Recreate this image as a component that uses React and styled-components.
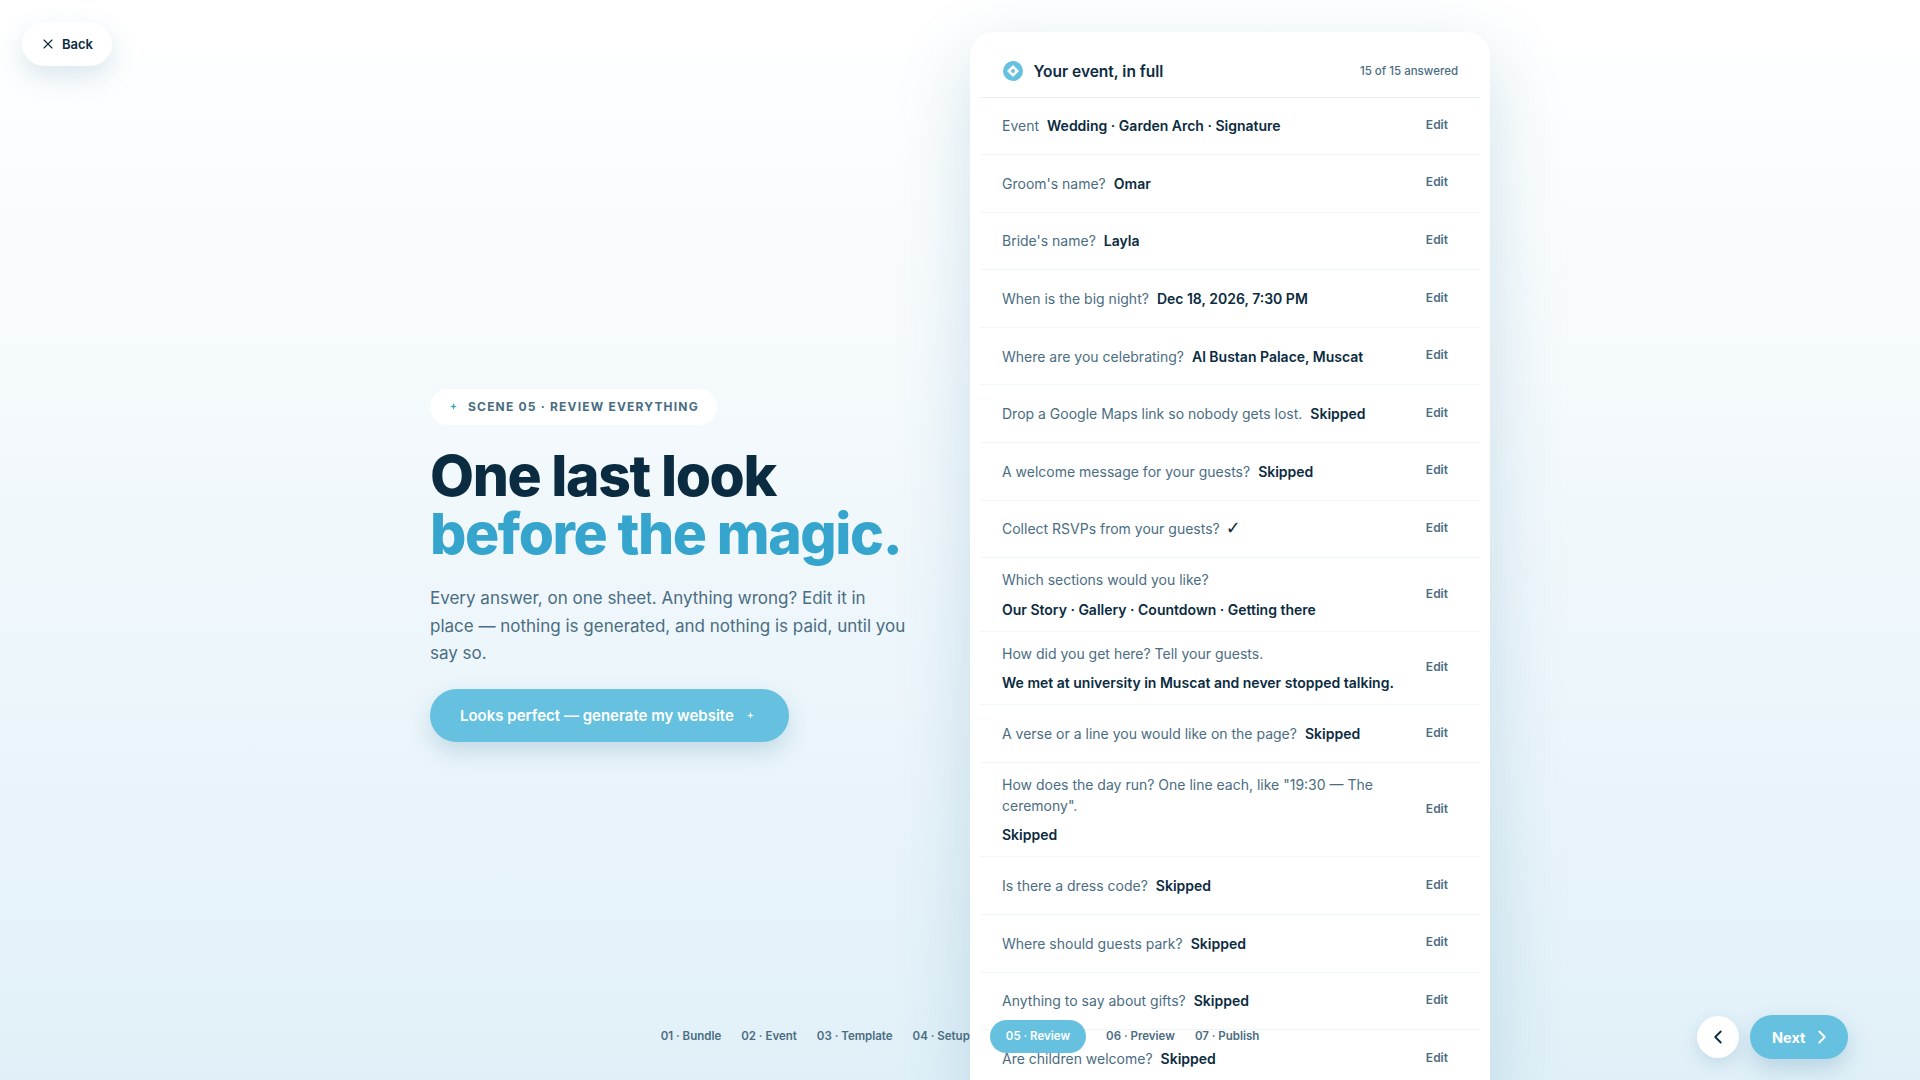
import React from "react";
import styled, { createGlobalStyle } from "styled-components";
import { X, ChevronLeft, ChevronRight } from "lucide-react";

const Global = createGlobalStyle`
  html, body { margin: 0; padding: 0; height: 100%; }
  body { font-family: Inter, "Liberation Sans", sans-serif; color: #0b2b40; }
  * { box-sizing: border-box; }
`;

const Page = styled.div`
  position: relative;
  height: 100vh;
  overflow: hidden;
  background: linear-gradient(180deg, #ffffff 0%, #e1f0f8 100%);
`;

const BackButton = styled.button`
  position: absolute;
  top: 22px;
  left: 22px;
  z-index: 3;
  display: flex;
  align-items: center;
  gap: 6px;
  width: 90px;
  height: 44px;
  padding: 0 0 0 18px;
  border: 0;
  border-radius: 22px;
  background: #fff;
  color: #0b2b40;
  font: 600 13px Inter, sans-serif;
  box-shadow: 0 10px 24px rgba(60, 130, 165, 0.18);
`;

const Columns = styled.main`
  display: grid;
  grid-template-columns: 480px 520px;
  gap: 60px;
  justify-content: center;
  height: 100%;
`;

const Intro = styled.section`
  display: flex;
  flex-direction: column;
  align-items: flex-start;
  justify-content: center;
  padding-top: 19px;
`;

const Eyebrow = styled.div`
  display: flex;
  align-items: center;
  gap: 11px;
  height: 36px;
  padding: 0 18px 0 20px;
  border-radius: 18px;
  background: #fff;
  color: #486d83;
  font-size: 12px;
  font-weight: 700;
  letter-spacing: 1.2px;
`;

const Title = styled.h1`
  margin: 22px 0 0;
  font-family: Inter, sans-serif;
  font-size: 57px;
  font-weight: 800;
  line-height: 58px;
  letter-spacing: -1.4px;
  color: #0a2b40;
`;

const TitleAccent = styled.span`
  display: block;
  color: #35a5ce;
`;

const Lead = styled.p`
  margin: 22.5px 0 0;
  font-size: 17px;
  line-height: 27.2px;
  color: #4a6d82;
`;

const Cta = styled.button`
  display: flex;
  align-items: center;
  gap: 13px;
  height: 53px;
  margin-top: 22px;
  padding: 0 35px 0 30px;
  border: 0;
  border-radius: 27px;
  background: #65c1df;
  color: #fff;
  font: 600 15px Inter, sans-serif;
  box-shadow: 0 10px 22px rgba(60, 130, 165, 0.22);
`;

const Sheet = styled.section`
  align-self: start;
  margin-top: 32px;
  padding: 0 10px 24px;
  border-radius: 24px;
  background: #fff;
  box-shadow: 0 24px 70px rgba(60, 130, 165, 0.22);
`;

const SheetHead = styled.header`
  display: flex;
  align-items: center;
  gap: 11px;
  height: 65.5px;
  padding: 14px 22px 0 22.5px;
  border-bottom: 1px solid #e4f3f8;
`;

const SheetTitle = styled.h2`
  flex: 1;
  margin: 0;
  font-size: 15.5px;
  font-weight: 600;
  color: #0b2b40;
`;

const Count = styled.span`
  font-size: 11.5px;
  font-weight: 500;
  color: #4a6d82;
`;

const Row = styled.div`
  display: flex;
  align-items: center;
  justify-content: space-between;
  gap: 20px;
  min-height: 57.6px;
  padding: 11px 32px 11px 22px;
  border-bottom: 1px solid #f0f7fa;
  &:last-child { border-bottom: 0; }
`;

const RowText = styled.div`
  flex: 1;
  display: ${p => (p.$stacked ? "flex" : "block")};
  flex-direction: column;
  gap: 8.5px;
  font-size: 14px;
  line-height: 21px;
  color: #4a6d82;
`;

const Question = styled.span`
  margin-right: ${p => (p.$stacked ? "0" : "8px")};
`;

const Answer = styled.strong`
  margin-left: ${p => (p.$mark ? "-2px" : "0")};
  font-family: ${p => (p.$mark ? '"DejaVu Sans", sans-serif' : "inherit")};
  font-size: ${p => (p.$mark ? "18px" : "inherit")};
  line-height: ${p => (p.$mark ? "1" : "inherit")};
  font-weight: ${p => (p.$mark ? 400 : 600)};
  color: #0b2b40;
`;

const EditLink = styled.button`
  flex: none;
  padding: 0;
  margin-top: -3px;
  border: 0;
  background: none;
  color: #4a6d82;
  font: 600 12px Inter, sans-serif;
`;

const Steps = styled.nav`
  position: absolute;
  left: 0;
  right: 0;
  bottom: 27px;
  z-index: 2;
  display: flex;
  justify-content: center;
  align-items: center;
  gap: 4px;
`;

const Step = styled.span`
  height: 33px;
  padding: 0 ${p => (p.$active ? "16px" : "8px")};
  margin: 0 ${p => (p.$active ? "8px" : "0")};
  border-radius: 17px;
  background: ${p => (p.$active ? "#65c1df" : "transparent")};
  color: ${p => (p.$active ? "#fff" : "#4a6d82")};
  font-size: 11.5px;
  font-weight: 600;
  line-height: 33px;
`;

const Pager = styled.div`
  position: absolute;
  right: 72px;
  bottom: 21px;
  z-index: 3;
  display: flex;
  align-items: center;
  gap: 11px;
`;

const RoundButton = styled.button`
  display: grid;
  place-items: center;
  width: 42px;
  height: 42px;
  padding: 0;
  border: 0;
  border-radius: 50%;
  background: #fff;
  color: #0b2b40;
  box-shadow: 0 6px 16px rgba(60, 130, 165, 0.18);
`;

const NextButton = styled.button`
  display: flex;
  align-items: center;
  gap: 6px;
  width: 98px;
  height: 44px;
  padding: 0 0 0 22px;
  border: 0;
  border-radius: 22px;
  background: #65c1df;
  color: #fff;
  font: 700 14.5px Inter, sans-serif;
  box-shadow: 0 10px 22px rgba(60, 130, 165, 0.25);
`;

const Sparkle = ({ color, size = 7 }) => (
  <svg width={size} height={size} viewBox="0 0 10 10" aria-hidden="true">
    <path d="M5 0 L6.2 3.8 L10 5 L6.2 6.2 L5 10 L3.8 6.2 L0 5 L3.8 3.8 Z" fill={color} />
  </svg>
);

const Badge = () => (
  <svg width="20" height="20" viewBox="0 0 20 20" aria-hidden="true">
    <circle cx="10" cy="10" r="10" fill="#65c1df" />
    <path d="M10 4 L16 10 L10 16 L4 10 Z" fill="#fff" />
    <circle cx="10" cy="10" r="2" fill="#65c1df" />
  </svg>
);

const rows = [
  ["Event", "Wedding · Garden Arch · Signature"],
  ["Groom's name?", "Omar"],
  ["Bride's name?", "Layla"],
  ["When is the big night?", "Dec 18, 2026, 7:30 PM"],
  ["Where are you celebrating?", "Al Bustan Palace, Muscat"],
  ["Drop a Google Maps link so nobody gets lost.", "Skipped"],
  ["A welcome message for your guests?", "Skipped"],
  ["Collect RSVPs from your guests?", "✓"],
  ["Which sections would you like?", "Our Story · Gallery · Countdown · Getting there", true],
  ["How did you get here? Tell your guests.", "We met at university in Muscat and never stopped talking.", true],
  ["A verse or a line you would like on the page?", "Skipped"],
  ["How does the day run? One line each, like \"19:30 — The ceremony\".", "Skipped", true],
  ["Is there a dress code?", "Skipped"],
  ["Where should guests park?", "Skipped"],
  ["Anything to say about gifts?", "Skipped"],
  ["Are children welcome?", "Skipped"],
];

const steps = ["01 · Bundle", "02 · Event", "03 · Template", "04 · Setup", "05 · Review", "06 · Preview", "07 · Publish"];

export default function App() {
  return (
    <Page>
      <Global />
      <BackButton><X size={16} strokeWidth={1.7} />Back</BackButton>
      <Columns>
        <Intro>
          <Eyebrow><Sparkle color="#35a5ce" />SCENE 05 · REVIEW EVERYTHING</Eyebrow>
          <Title>One last look<TitleAccent>before the magic.</TitleAccent></Title>
          <Lead>Every answer, on one sheet. Anything wrong? Edit it in place — nothing is generated, and nothing is paid, until you say so.</Lead>
          <Cta>Looks perfect — generate my website <Sparkle color="#fff" /></Cta>
        </Intro>
        <Sheet>
          <SheetHead>
            <Badge />
            <SheetTitle>Your event, in full</SheetTitle>
            <Count>15 of 15 answered</Count>
          </SheetHead>
          {rows.map(([q, a, stacked]) => (
            <Row key={q}>
              <RowText $stacked={stacked}>
                <Question $stacked={stacked}>{q}</Question>
                <Answer $mark={a === "✓"}>{a}</Answer>
              </RowText>
              <EditLink>Edit</EditLink>
            </Row>
          ))}
        </Sheet>
      </Columns>
      <Steps>
        {steps.map(s => <Step key={s} $active={s.startsWith("05")}>{s}</Step>)}
      </Steps>
      <Pager>
        <RoundButton><ChevronLeft size={22} strokeWidth={2} /></RoundButton>
        <NextButton>Next <ChevronRight size={22} strokeWidth={2} /></NextButton>
      </Pager>
    </Page>
  );
}
